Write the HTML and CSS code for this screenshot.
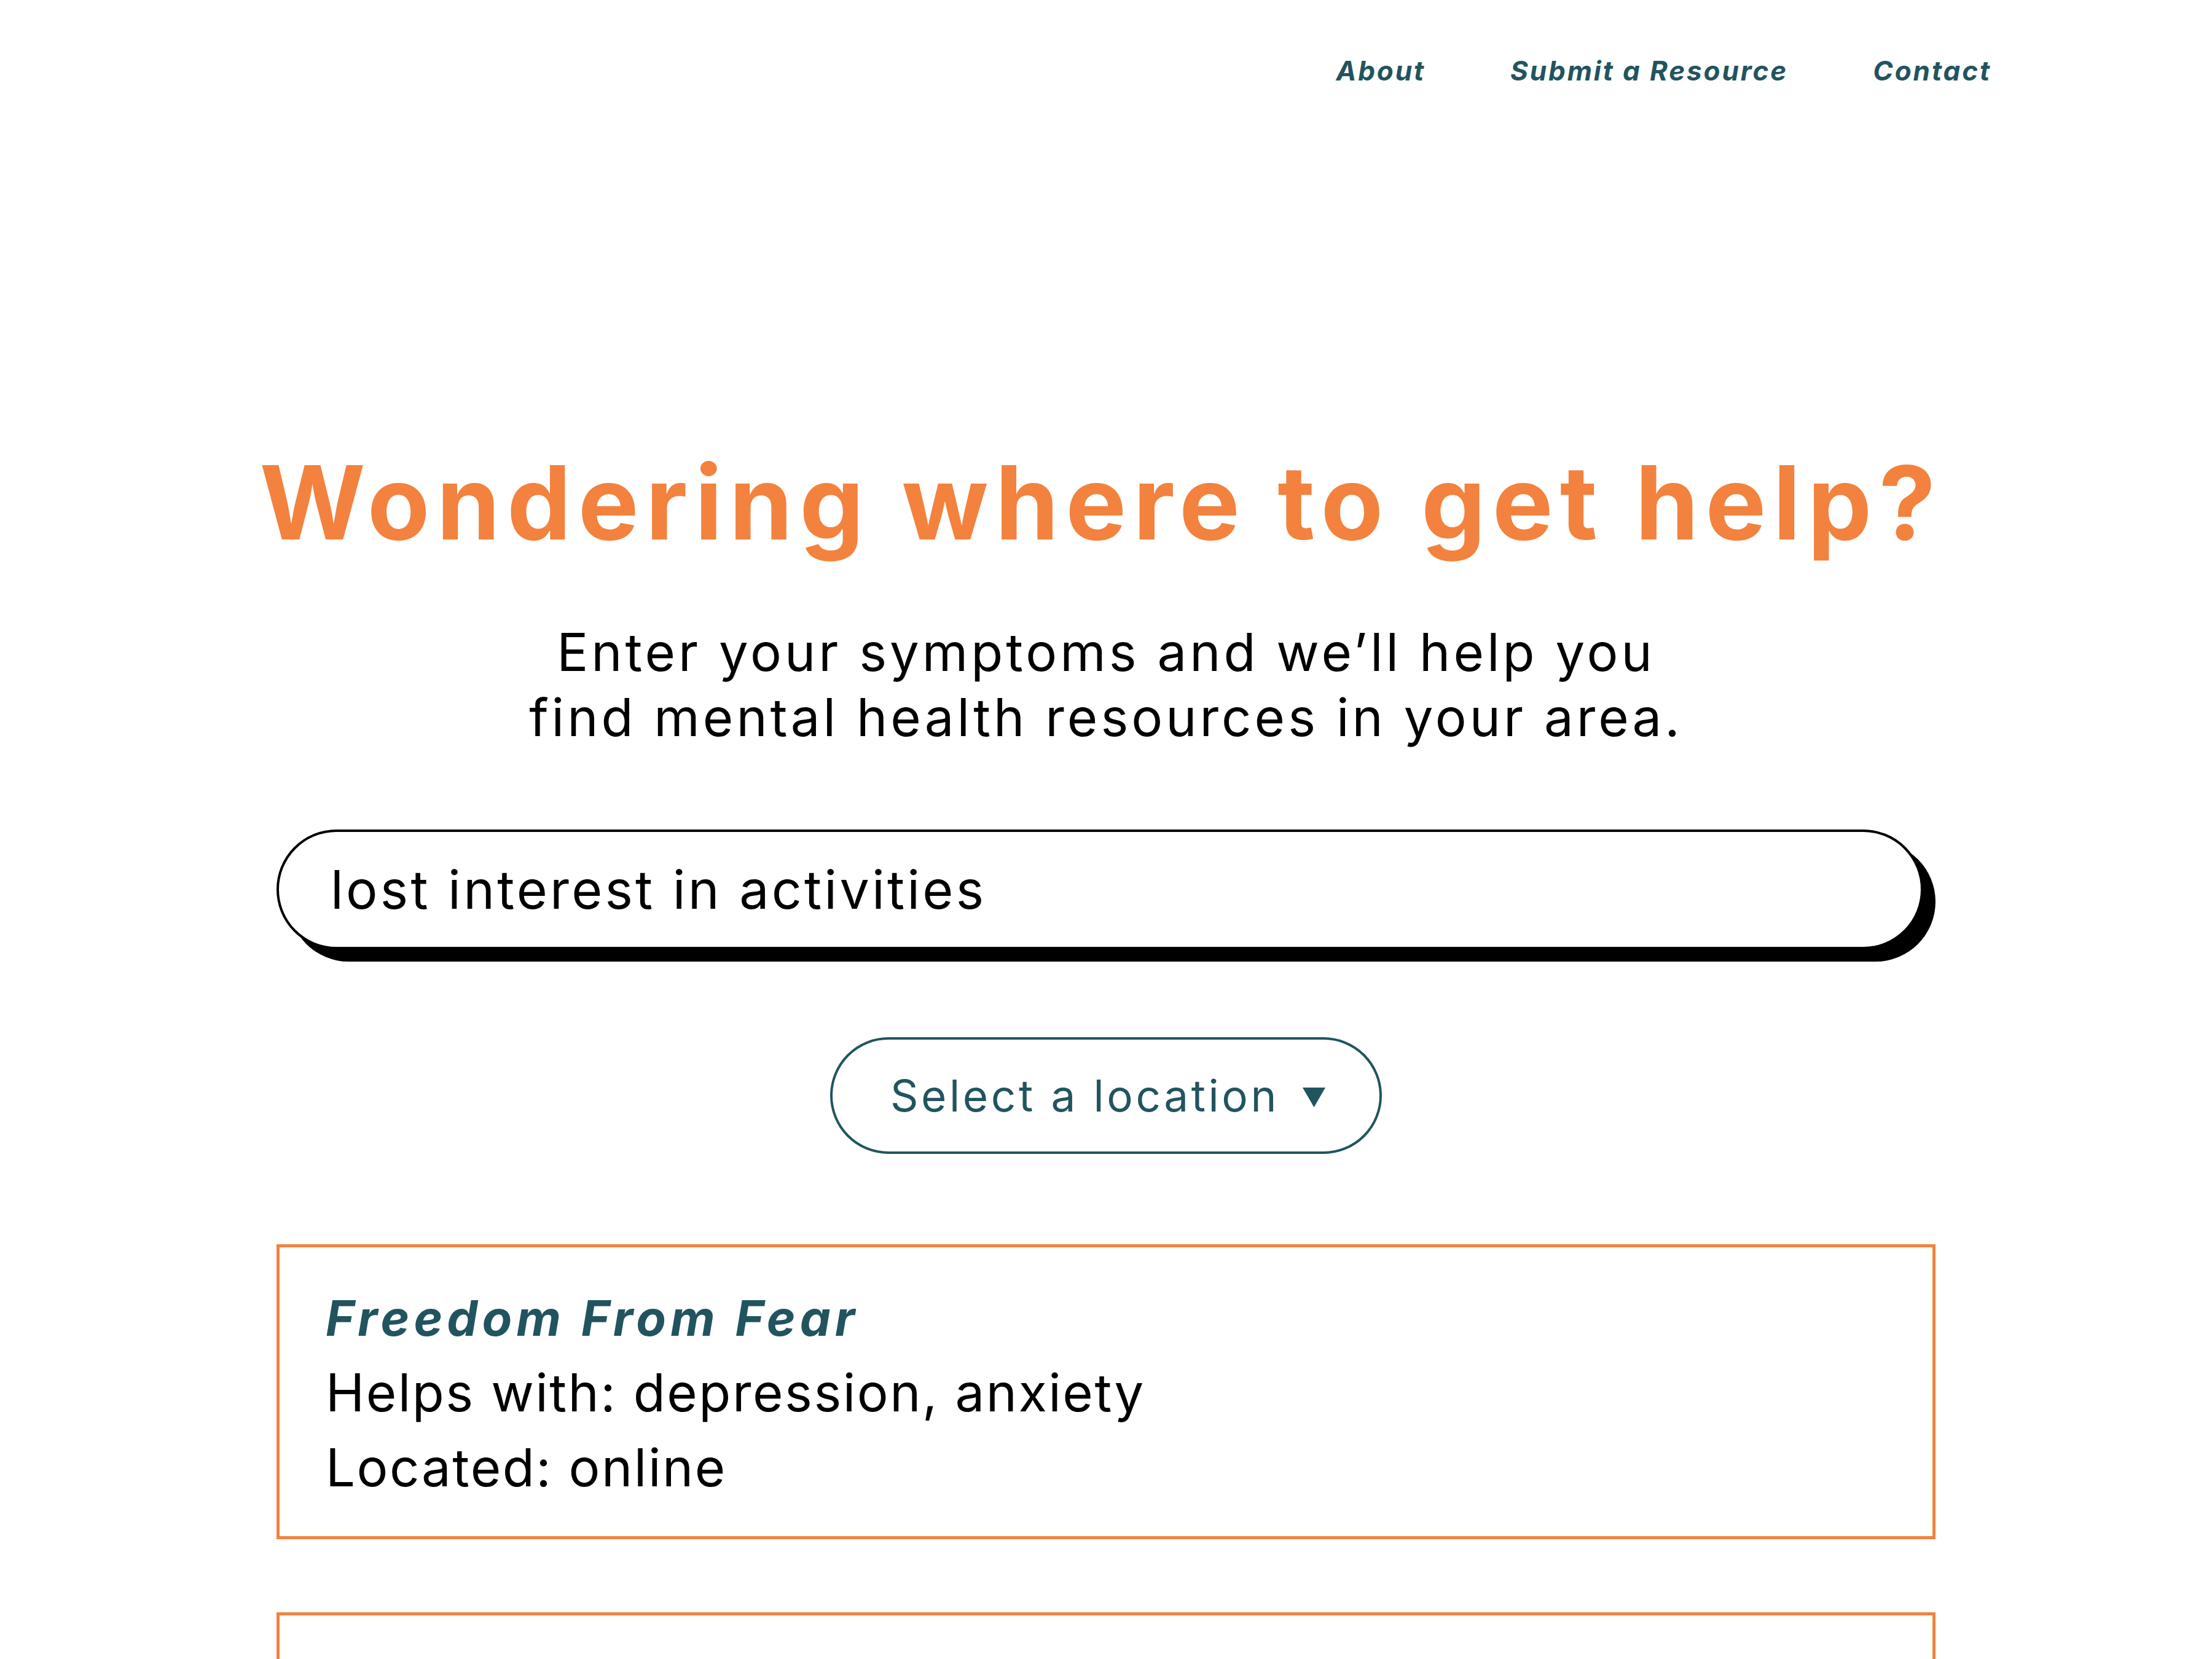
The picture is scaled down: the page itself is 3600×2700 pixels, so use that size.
FILE: index.html
```html
<!DOCTYPE html>
<html lang="en">
<head>
<meta charset="utf-8">
<title>Wondering where to get help?</title>
<link rel="stylesheet" href="styles.css">
</head>
<body>
<header class="topbar">
  <nav class="nav">
    <a class="nav-link" href="#">About</a>
    <a class="nav-link" href="#">Submit a Resource</a>
    <a class="nav-link" href="#">Contact</a>
  </nav>
</header>
<main class="main">
  <h1 class="title">Wondering where to get help?</h1>
  <p class="lead">Enter your symptoms and we’ll help you<br>find mental health resources in your area.</p>
  <div class="search"><span class="search-text">lost interest in activities</span></div>
  <button class="select" type="button"><span class="select-text">Select a location</span><svg class="select-arrow" viewBox="0 0 37 32" aria-hidden="true"><path d="M0 0H37L18.5 32Z"/></svg></button>
  <section class="results">
    <article class="card">
      <h2 class="card-title">Freedom From Fear</h2>
      <p class="card-line">Helps with: depression, anxiety</p>
      <p class="card-line">Located: online</p>
    </article>
    <article class="card">
      <h2 class="card-title">Crisis Text Line</h2>
      <p class="card-line">Helps with: depression, anxiety</p>
      <p class="card-line">Located: online</p>
    </article>
  </section>
</main>
</body>
</html>
```
FILE: styles.css
```css
html, body {
  margin: 0;
  padding: 0;
  background: #ffffff;
}
body {
  font-family: Inter, "DejaVu Sans", sans-serif;
  color: #000000;
}
.topbar {
  display: flex;
  justify-content: flex-end;
  padding: 85px 359px 0 0;
}
.nav {
  display: flex;
  gap: 138px;
}
.nav-link {
  font-size: 44px;
  line-height: 60px;
  font-weight: 700;
  font-style: italic;
  letter-spacing: 2.9px;
  color: #22545f;
  text-decoration: none;
}
.main {
  width: 2700px;
  margin: 0 auto;
  display: flex;
  flex-direction: column;
  align-items: center;
}
.title {
  margin: 573px 16px 0 0;
  font-size: 166px;
  line-height: 200px;
  font-weight: 700;
  letter-spacing: 11.1px;
  color: #f2823e;
  text-align: center;
  white-space: nowrap;
}
.lead {
  margin: 91px 0 0;
  font-size: 85px;
  line-height: 106px;
  letter-spacing: 5px;
  text-align: center;
  color: #000;
}
.search {
  box-sizing: border-box;
  align-self: flex-start;
  width: 2680px;
  height: 195px;
  margin-top: 129px;
  border: 4px solid #000;
  border-radius: 98px;
  box-shadow: 20px 20px 0 #000;
  display: flex;
  align-items: center;
  padding: 0 84px;
  background: #fff;
}
.search-text {
  font-size: 86px;
  line-height: 100px;
  letter-spacing: 4.2px;
  color: #000;
}
.select {
  box-sizing: border-box;
  margin-top: 143px;
  height: 190px;
  padding: 0 88px 0 94px;
  border: 4px solid #1f5560;
  border-radius: 95px;
  background: #fff;
  display: flex;
  align-items: center;
  gap: 38px;
  font-family: inherit;
  cursor: pointer;
}
.select-text {
  font-size: 71px;
  line-height: 90px;
  letter-spacing: 4.6px;
  color: #22545f;
}
.select-arrow {
  width: 37px;
  height: 32px;
  fill: #22545f;
  margin-top: 6px;
}
.results {
  align-self: stretch;
  margin-top: 147px;
  display: flex;
  flex-direction: column;
  gap: 119px;
}
.card {
  border: 5px solid #f2823e;
  padding: 54px 75px 50px;
}
.card-title {
  margin: 0;
  font-size: 79.5px;
  line-height: 122px;
  font-weight: 700;
  font-style: italic;
  letter-spacing: 7px;
  color: #22545f;
}
.card-line {
  margin: 0;
  font-size: 85px;
  line-height: 122px;
  letter-spacing: 2.5px;
  color: #000;
}
```
